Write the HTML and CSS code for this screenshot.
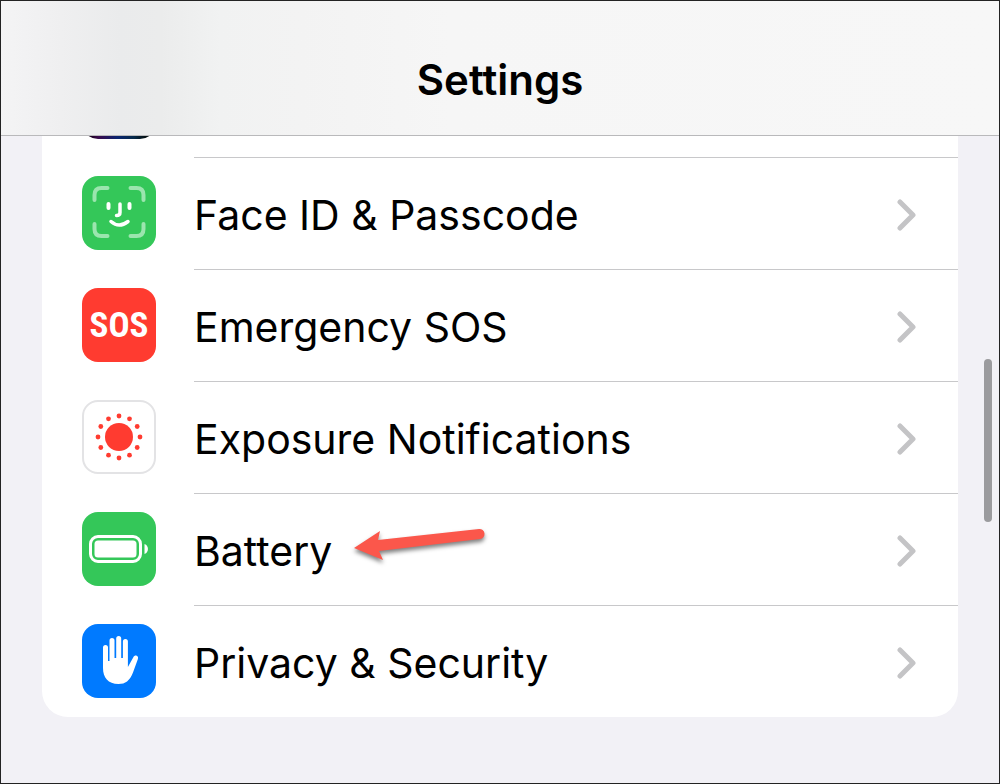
FILE: index.html
```html
<!DOCTYPE html>
<html lang="en">
<head>
<meta charset="utf-8">
<meta name="viewport" content="width=device-width, initial-scale=1">
<title>Settings</title>
<link rel="stylesheet" href="styles.css">
</head>
<body>
<div class="screen">
  <header class="navbar"><h1 class="title">Settings</h1></header>
  <main class="content">
    <ul class="group">
      <li class="peek" aria-hidden="true"><span class="peek-icon"></span></li>
      <li>
        <a class="row" href="#face-id">
          <svg class="icon" viewBox="0 0 74 74" aria-hidden="true">
            <rect width="74" height="74" rx="16" fill="#34c759"/>
            <g fill="none" stroke-linecap="round" stroke-width="4">
              <path d="M12.500 24v-5q0-7 7-7h6M48.500 12h6q7 0 7 7v5M61.500 48v5q0 7-7 7h-6M25.500 60h-6q-7 0-7-7v-5" stroke="#9be5ae"/>
              <path d="M26.500 28v4M47.500 28v4" stroke="#fff"/>
              <path d="M38 28v8.500q0 3-3.500 3M29 45.500q8 7 17 0" stroke="#fff" stroke-width="3.500"/>
            </g>
          </svg>
          <span class="cell"><span class="label">Face ID &amp; Passcode</span>
            <svg class="chevron" viewBox="0 0 20 32" aria-hidden="true"><path d="M3 3l13 13L3 29"/></svg></span>
        </a>
      </li>
      <li>
        <a class="row" href="#sos">
          <span class="icon sos" aria-hidden="true">SOS</span>
          <span class="cell"><span class="label">Emergency SOS</span>
            <svg class="chevron" viewBox="0 0 20 32" aria-hidden="true"><path d="M3 3l13 13L3 29"/></svg></span>
        </a>
      </li>
      <li>
        <a class="row" href="#exposure">
          <svg class="icon" viewBox="0 0 74 74" aria-hidden="true">
            <rect x="1" y="1" width="72" height="72" rx="15" fill="#fff" stroke="#e3e3e5" stroke-width="2"/>
            <g fill="#ff3b30">
              <circle cx="37" cy="37" r="14"/>
              <circle cx="37" cy="16" r="2.400"/><circle cx="47.500" cy="18.800" r="2.400"/>
              <circle cx="55.200" cy="26.500" r="2.400"/><circle cx="58" cy="37" r="2.400"/>
              <circle cx="55.200" cy="47.500" r="2.400"/><circle cx="47.500" cy="55.200" r="2.400"/>
              <circle cx="37" cy="58" r="2.400"/><circle cx="26.500" cy="55.200" r="2.400"/>
              <circle cx="18.800" cy="47.500" r="2.400"/><circle cx="16" cy="37" r="2.400"/>
              <circle cx="18.800" cy="26.500" r="2.400"/><circle cx="26.500" cy="18.800" r="2.400"/>
            </g>
          </svg>
          <span class="cell"><span class="label">Exposure Notifications</span>
            <svg class="chevron" viewBox="0 0 20 32" aria-hidden="true"><path d="M3 3l13 13L3 29"/></svg></span>
        </a>
      </li>
      <li class="battery">
        <a class="row" href="#battery">
          <svg class="icon" viewBox="0 0 74 74" aria-hidden="true">
            <rect width="74" height="74" rx="16" fill="#34c759"/>
            <rect x="8.500" y="24.500" width="50" height="25" rx="7.500" fill="none" stroke="#fff" stroke-width="3"/>
            <rect x="12.500" y="28.500" width="42" height="17" rx="3.500" fill="#fff"/>
            <path d="M62.500 32c4.600 1.600 4.600 8.400 0 10z" fill="#fff"/>
          </svg>
          <span class="cell"><span class="label">Battery</span>
            <svg class="chevron" viewBox="0 0 20 32" aria-hidden="true"><path d="M3 3l13 13L3 29"/></svg></span>
        </a>
        <svg class="pointer" viewBox="0 0 140 44" aria-hidden="true">
          <path d="M4 25L30 8l-2 9L129 6a5 5 0 0 1 1 10L29 28l4 9z"/>
        </svg>
      </li>
      <li>
        <a class="row" href="#privacy">
          <svg class="icon" viewBox="0 0 74 74" aria-hidden="true">
            <rect width="74" height="74" rx="16" fill="#007aff"/>
            <path fill="#fff" d="M21 23.500a2.500 2.500 0 0 1 5 0V37h1.500V16.500a2.500 2.500 0 0 1 5 0V34h1.700V14.500a2.500 2.500 0 0 1 5 0V34h1.700V17.500a2.500 2.500 0 0 1 5 0V43l5.300-9.500c1.600-3.300 5.800-2 4.700 1.500L51 48.500C47.500 57 43.500 60 36.500 60 26 60 21 53.500 21 44z"/>
          </svg>
          <span class="cell"><span class="label">Privacy &amp; Security</span>
            <svg class="chevron" viewBox="0 0 20 32" aria-hidden="true"><path d="M3 3l13 13L3 29"/></svg></span>
        </a>
      </li>
    </ul>
  </main>
  <span class="scroll-thumb" aria-hidden="true"></span>
</div>
</body>
</html>
```
FILE: styles.css
```css
* { box-sizing: border-box; }

body {
  margin: 0;
  font-family: Inter, "Liberation Sans", sans-serif;
  color: #000;
}

.screen {
  position: relative;
  min-height: 100vh;
  border: 1px solid #232323;
  background: #f2f1f6;
}

.navbar {
  padding: 54px 16px 30px;
  border-bottom: 1px solid #b9b9bb;
  background: linear-gradient(90deg, #f4f4f5 0%, #efeff0 6%, #eaebec 12%, #ebecec 16%, #f1f2f2 22%, #f3f3f3 30%, #f6f6f6 45%, #f7f7f7 100%);
  text-align: center;
}

.title {
  margin: 0;
  font-size: 42px;
  line-height: 50px;
  font-weight: 600;
}

.content { padding: 0 41px 64px; }

.group {
  margin: 0;
  padding: 0;
  list-style: none;
  background: #fff;
  border-radius: 0 0 26px 26px;
  overflow: hidden;
}

.peek {
  display: flex;
  align-items: flex-end;
  height: 21px;
  padding: 0 0 18px 40px;
}

.peek-icon {
  flex: none;
  width: 74px;
  height: 74px;
  border-radius: 16px;
  background: linear-gradient(90deg, #160018 10%, #3a0a4c 22%, #0a2570 48%, #062a4a 70%, #041014 85%);
}

.row {
  display: flex;
  align-items: center;
  gap: 38px;
  padding-left: 40px;
  color: inherit;
  text-decoration: none;
}

.icon {
  flex: none;
  width: 74px;
  height: 74px;
}

.sos {
  display: flex;
  align-items: center;
  justify-content: center;
  border-radius: 16px;
  background: #ff3b30;
  color: #fff;
  font: 700 35px "Liberation Sans Narrow", "Roboto Condensed", "DejaVu Sans Condensed", sans-serif;
}

.cell {
  flex: 1;
  display: flex;
  align-items: center;
  justify-content: space-between;
  min-height: 112px;
  padding: 2px 41px 0 0;
  border-top: 1px solid #c8c8ca;
}

.label {
  font-size: 41px;
  line-height: 50px;
}

.chevron {
  flex: none;
  width: 20px;
  height: 32px;
  fill: none;
  stroke: #c4c4c6;
  stroke-width: 5;
  stroke-linecap: round;
  stroke-linejoin: round;
}

.battery { position: relative; }

/* Callout arrow laid over the row */
.pointer {
  position: absolute;
  left: 308px;
  top: 30px;
  width: 140px;
  height: 44px;
  fill: #fb574b;
  filter: drop-shadow(0 3px 2px rgba(0, 0, 0, 0.5));
  pointer-events: none;
}

.scroll-thumb {
  position: absolute;
  right: 7px;
  top: 358px;
  width: 8px;
  height: 163px;
  border-radius: 4px;
  background: #9b9b9e;
}
```
